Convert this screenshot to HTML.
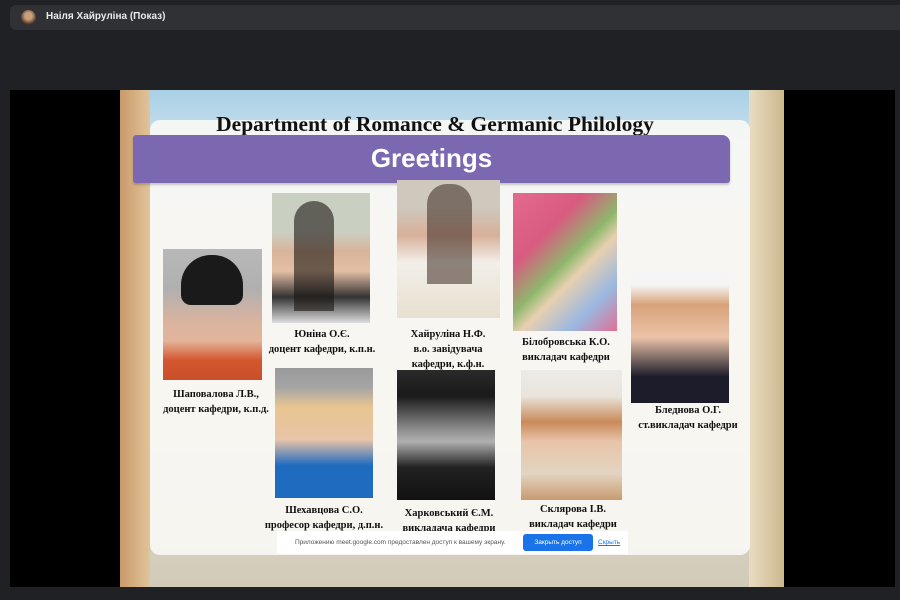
<!DOCTYPE html>
<html><head><meta charset="utf-8"><style>
*{margin:0;padding:0;box-sizing:border-box}
body{width:900px;height:600px;background:#202124;position:relative;overflow:hidden;font-family:"Liberation Sans",sans-serif}
.bar{position:absolute;left:10px;top:5px;width:900px;height:25px;background:#303134;border-radius:6px}
.av{position:absolute;left:21px;top:10px;width:15px;height:15px;border-radius:50%;background:radial-gradient(circle at 50% 40%,#c9a07a 30%,#4a3326 70%)}
.name{position:absolute;left:46px;top:11px;color:#e8eaed;font-size:10px;font-weight:bold}
.video{position:absolute;left:10px;top:90px;width:885px;height:497px;background:#000}
.slide{position:absolute;left:120px;top:90px;width:664px;height:497px;background:linear-gradient(180deg,#a9d0e6 0,#cfe3ee 60px,#e8e2d2 200px,#ddd6c6 400px,#d2cab8 497px);overflow:hidden}
.lb{position:absolute;left:0;top:0;width:30px;height:497px;background:linear-gradient(90deg,#c99a6a,#e0c49a)}
.rb{position:absolute;right:0;top:0;width:35px;height:497px;background:linear-gradient(90deg,#e8dcc0,#cdb88f)}
.card{position:absolute;left:30px;top:30px;width:600px;height:435px;background:rgba(250,248,245,.9);border-radius:10px}
.title{position:absolute;left:-17px;top:22px;width:664px;text-align:center;font-family:"Liberation Serif",serif;font-weight:bold;font-size:21.5px;color:#111}
.purple{position:absolute;left:13px;top:45px;width:597px;height:48px;background:#7b68b0;border-radius:3px 8px 3px 3px;box-shadow:0 2px 2px rgba(0,0,0,.2)}
.purple span{position:absolute;left:0;right:0;top:8px;text-align:center;color:#fff;font-weight:bold;font-size:26px}
.p{position:absolute;overflow:hidden}
.lbl{position:absolute;font-family:"Liberation Serif",serif;font-weight:bold;font-size:10.5px;color:#111;text-align:center;line-height:15px;width:140px}
.notice{position:absolute;left:277px;top:531px;width:351px;height:23px;background:#fff;font-size:6.5px;color:#555}
.btn{position:absolute;left:523px;top:534px;width:70px;height:17px;background:#1a73e8;border-radius:3px;color:#fff;font-size:6.5px;text-align:center;line-height:17px}
</style></head><body>
<div class="bar"></div><div class="av"></div><div class="name">Наіля Хайруліна (Показ)</div>
<div class="video"></div>
<div class="slide">
<div class="lb"></div><div class="rb"></div>
<div class="card"></div>
<div class="title">Department of Romance &amp; Germanic Philology</div>
<div class="purple"><span>Greetings</span></div>
</div>
<div class="p" style="left:163px;top:249px;width:99px;height:131px;background:linear-gradient(180deg,#b8b8b8 0,#b0b0b0 30%,#d9b3a0 55%,#e3b59a 70%,#d4562e 85%,#c8502a 100%)"><div style="position:absolute;left:18px;top:6px;width:62px;height:50px;border-radius:30px 30px 10px 10px;background:#1a1a1a"></div></div>
<div class="p" style="left:272px;top:193px;width:98px;height:130px;background:linear-gradient(180deg,#c9d0c2 0,#c9d0c2 30%,#d8b49a 45%,#e3c0a5 60%,#333 80%,#ddd 100%)"><div style="position:absolute;left:22px;top:8px;width:40px;height:110px;border-radius:20px 20px 0 0;background:#1d1512;opacity:.6"></div></div>
<div class="p" style="left:397px;top:180px;width:103px;height:138px;background:linear-gradient(180deg,#cfc8bc 0,#cfc8bc 20%,#d8b09a 40%,#f2efe8 60%,#e8e0d0 100%)"><div style="position:absolute;left:30px;top:4px;width:45px;height:100px;border-radius:20px 20px 0 0;background:#3a2820;opacity:.55"></div></div>
<div class="p" style="left:513px;top:193px;width:104px;height:138px;background:linear-gradient(135deg,#e46a8e 0,#d85b80 30%,#8fb76c 50%,#e8d0b0 60%,#9ab8e0 80%,#e06f95 100%)"></div>
<div class="p" style="left:631px;top:272px;width:98px;height:131px;background:linear-gradient(180deg,#f5f5f5 0,#f5f5f5 10%,#d8a27a 25%,#ebc3a8 50%,#1c1c2a 80%,#1c1c2a 100%)"></div>
<div class="p" style="left:275px;top:368px;width:98px;height:130px;background:linear-gradient(180deg,#9a9a9a 0,#a5a5a5 15%,#e8c590 30%,#e9c4a8 55%,#1f6bbf 75%,#1f6bbf 100%)"></div>
<div class="p" style="left:397px;top:370px;width:98px;height:130px;background:linear-gradient(180deg,#2a2a2a 0,#1a1a1a 20%,#8a8a8a 45%,#b0b0b0 55%,#222 75%,#111 100%)"></div>
<div class="p" style="left:521px;top:370px;width:101px;height:130px;background:linear-gradient(180deg,#ecebe6 0,#e9e4dc 20%,#c98a5a 40%,#e8c4aa 55%,#e2d4c0 80%,#c99a70 100%)"></div>
<div class="lbl" style="left:252px;top:327px">Юніна О.Є.<br>доцент кафедри, к.п.н.</div>
<div class="lbl" style="left:378px;top:327px">Хайруліна Н.Ф.<br>в.о. завідувача<br>кафедри, к.ф.н.</div>
<div class="lbl" style="left:496px;top:335px">Білобровська К.О.<br>викладач кафедри</div>
<div class="lbl" style="left:146px;top:387px">Шаповалова Л.В.,<br>доцент кафедри, к.п.д.</div>
<div class="lbl" style="left:618px;top:403px">Бледнова О.Г.<br>ст.викладач кафедри</div>
<div class="lbl" style="left:254px;top:503px">Шехавцова С.О.<br>професор кафедри, д.п.н.</div>
<div class="lbl" style="left:379px;top:506px">Харковський Є.М.<br>викладача кафедри</div>
<div class="lbl" style="left:503px;top:502px">Склярова І.В.<br>викладач кафедри</div>
<div class="notice"><span style="position:absolute;left:18px;top:8px">Приложению meet.google.com предоставлен доступ к вашему экрану.</span><span style="position:absolute;left:321px;top:8px;color:#1a73e8;text-decoration:underline">Скрыть</span></div>
<div class="btn">Закрыть доступ</div>
</body></html>
